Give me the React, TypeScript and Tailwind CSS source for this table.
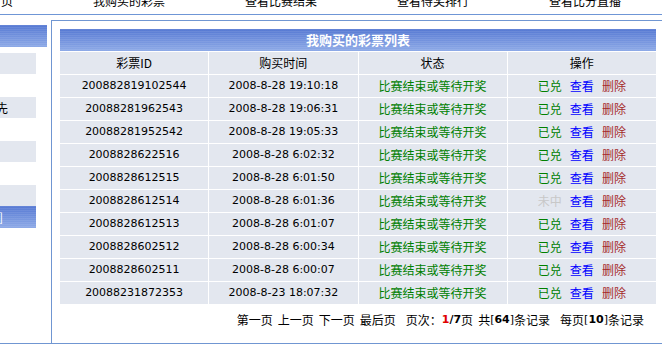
import React from "react";

// --- shared looks ---
const cjk = "font-['Noto_Sans_CJK_SC',sans-serif] text-[12px]";
const num = "font-['DejaVu_Sans','Noto_Sans_CJK_SC',sans-serif] text-[11px]";
const blueBar =
  "bg-[image:repeating-linear-gradient(to_bottom,rgba(255,255,255,0.08)_0px,rgba(255,255,255,0.08)_1px,transparent_1px,transparent_2px),linear-gradient(to_bottom,#5679d3,#8eaae7)]";
const cellBg = "bg-[#e3e7ef]";

interface Ticket {
  id: string;
  time: string;
  won: boolean;
}

const tickets: Ticket[] = [
  { id: "200882819102544", time: "2008-8-28 19:10:18", won: true },
  { id: "20088281962543", time: "2008-8-28 19:06:31", won: true },
  { id: "20088281952542", time: "2008-8-28 19:05:33", won: true },
  { id: "2008828622516", time: "2008-8-28 6:02:32", won: true },
  { id: "2008828612515", time: "2008-8-28 6:01:50", won: true },
  { id: "2008828612514", time: "2008-8-28 6:01:36", won: false },
  { id: "2008828612513", time: "2008-8-28 6:01:07", won: true },
  { id: "2008828602512", time: "2008-8-28 6:00:34", won: true },
  { id: "2008828602511", time: "2008-8-28 6:00:07", won: true },
  { id: "20088231872353", time: "2008-8-23 18:07:32", won: true },
];

const navItems = ["首页", "我购买的彩票", "查看比赛结果", "查看得奖排行", "查看比分直播"];

const Cell = ({ children, className = "" }: { children: React.ReactNode; className?: string }) => (
  <div className={`h-[22px] flex items-center justify-center whitespace-nowrap ${cellBg} ${className}`}>
    {children}
  </div>
);

// --- left menu (mostly scrolled off to the left) ---
const SideMenu = () => (
  <div className="w-[51px] shrink-0 pt-[5px] flex flex-col">
    <div className={`w-[47px] h-[22px] ${blueBar}`} />
    <div className="h-[6px]" />
    <div className={`w-[36px] h-[21px] ${cellBg}`} />
    <div className="h-[23px]" />
    <div className={`w-[36px] h-[21px] ${cellBg} flex items-center overflow-hidden`}>
      <span className={`${cjk} leading-[12px] -ml-[4px] text-black`}>先</span>
    </div>
    <div className="h-[23px]" />
    <div className={`w-[36px] h-[21px] ${cellBg}`} />
    <div className="h-[23px]" />
    <div className={`w-[36px] h-[21px] ${cellBg}`} />
    <div className={`w-[36px] h-[22px] ${blueBar} flex items-center overflow-hidden`}>
      <span className={`${cjk} leading-[12px] -ml-[1px] text-white`}>]</span>
    </div>
  </div>
);

// --- main list ---
const TicketTable = () => (
  <div className="w-[596px]">
    <div className={`h-[22px] flex items-center justify-center ${blueBar}`}>
      <span className={`${cjk} text-[13px] font-bold text-white`}>我购买的彩票列表</span>
    </div>
    <div className="grid grid-cols-4 gap-px bg-white pt-px">
      <Cell className={cjk}>彩票ID</Cell>
      <Cell className={cjk}>购买时间</Cell>
      <Cell className={cjk}>状态</Cell>
      <Cell className={cjk}>操作</Cell>
      {tickets.map((t) => (
        <React.Fragment key={t.id}>
          <Cell className={`${num} text-black`}>{t.id}</Cell>
          <Cell className={`${num} text-black`}>{t.time}</Cell>
          <Cell className={`${cjk} text-[#008000]`}>比赛结束或等待开奖</Cell>
          <Cell className={`${cjk} gap-[8px]`}>
            <span className={t.won ? "text-[#008000]" : "text-[#c8c8c8]"}>{t.won ? "已兑" : "未中"}</span>
            <span className="text-[#0000ff]">查看</span>
            <span className="text-[#a52a2a]">删除</span>
          </Cell>
        </React.Fragment>
      ))}
    </div>
    <div className={`mt-[10px] pr-[12px] flex justify-end items-center leading-[12px] ${cjk} text-black whitespace-nowrap`}>
      <span>第一页</span>
      <span className="ml-[5px]">上一页</span>
      <span className="ml-[5px]">下一页</span>
      <span className="ml-[5px]">最后页</span>
      <span className="ml-[10px]">页次：</span>
      <span className={`${num} font-bold text-[#e00000]`}>1</span>
      <span className={`${num} font-bold`}>/7</span>
      <span>页</span>
      <span className="ml-[5px]">共</span>
      <span className={num}>[</span>
      <span className={`${num} font-bold`}>64</span>
      <span className={num}>]</span>
      <span>条记录</span>
      <span className="ml-[10px]">每页</span>
      <span className={num}>[</span>
      <span className={`${num} font-bold`}>10</span>
      <span className={num}>]</span>
      <span>条记录</span>
    </div>
  </div>
);

export default function App() {
  return (
    <div className="w-[662px] h-[364px] overflow-hidden bg-white text-black">
      {/* top navigation, cut at the top edge */}
      <div className="flex h-[15px] border-b border-[#6f96d6] items-start">
        <div className={`flex gap-[80px] -ml-[11px] -mt-[5px] leading-[12px] ${cjk} whitespace-nowrap`}>
          {navItems.map((n) => (
            <span key={n}>{n}</span>
          ))}
        </div>
      </div>

      <div className="mt-[5px] flex h-[324px] border-b border-[#7096d2]">
        <SideMenu />
        <div className="flex-1 border-l border-t border-[#7096d2] pl-[8px] pt-[8px]">
          <TicketTable />
        </div>
      </div>
    </div>
  );
}
